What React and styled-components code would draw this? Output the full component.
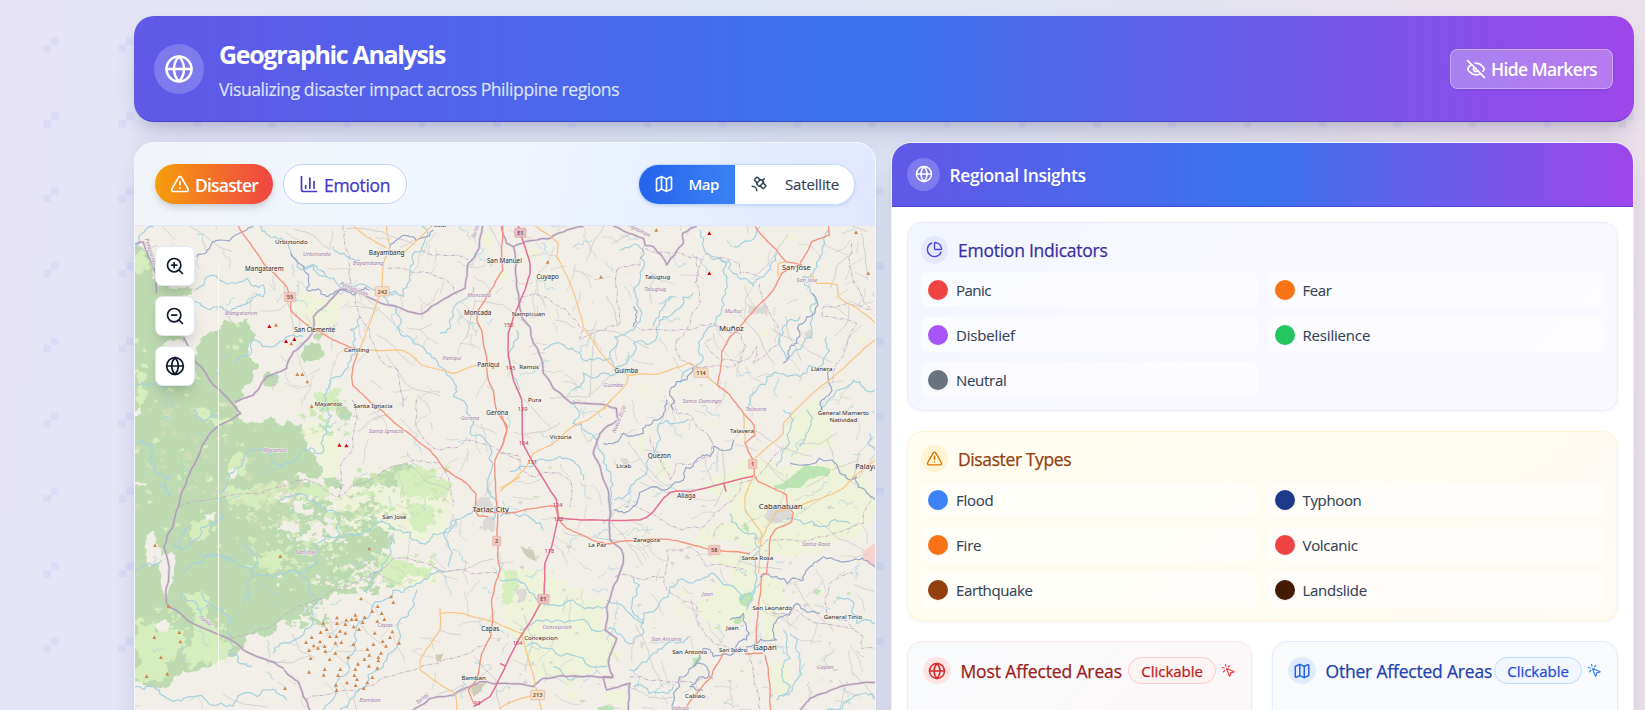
import React from 'react';
import styled, { createGlobalStyle } from 'styled-components';
import {
  Globe, TriangleAlert, ChartColumn, Map as MapIcon, Satellite,
  ZoomIn, ZoomOut, ChartPie, MousePointerClick,
} from 'lucide-react';

const GlobalStyle = createGlobalStyle`
  * { box-sizing: border-box; }
  body { margin: 0; overflow: hidden; font-family: "Open Sans", "Noto Sans", sans-serif; }
  button { font-family: inherit; margin: 0; }
`;

/* ---------- page shell ---------- */

const Page = styled.div`
  position: relative;
  height: 710px;
  overflow: hidden;
  background: linear-gradient(97deg, #e6e4f6 0%, #dfe6f4 42%, #e2e3f0 68%, #ebe2ec 86%, #ece1ea 100%);
`;

const Backdrop = styled.svg`
  position: absolute;
  inset: 0;
`;

const Content = styled.main`
  position: relative;
  display: flex;
  flex-direction: column;
  gap: 20px;
  padding: 16px 11px 0 134px;
`;

const shadow = '0 25px 31px -6px rgba(30,30,110,.08), 0 10px 13px -7px rgba(0,0,0,.13), 0 4px 22px rgba(50,50,130,.05)';
const brandGradient = 'linear-gradient(90deg, #6158e8 0%, #3a73ee 50%, #9e46ea 100%)';

const Hero = styled.header`
  display: flex;
  align-items: center;
  height: 106px;
  padding: 1px 21px 0 20px;
  border-radius: 20px;
  border-bottom: 1px solid rgba(60, 50, 190, 0.6);
  background: ${brandGradient};
  background-origin: border-box;
  box-shadow: ${shadow};
  color: #fff;
`;

const Orb = styled.span`
  flex: none;
  display: flex;
  align-items: center;
  justify-content: center;
  width: ${p => p.$size}px;
  height: ${p => p.$height || p.$size}px;
  border-radius: 50%;
  background: ${p => p.$bg || 'rgba(255,255,255,.2)'};
  color: ${p => p.$color || '#fff'};
`;

const HeroText = styled.div`
  flex: 1;
  margin-left: 15px;
  padding-top: 3px;
`;

const Title = styled.h1`
  margin: 0;
  font-size: 25px;
  font-weight: 700;
  line-height: 32px;
  letter-spacing: -1.33px;
`;

const Subtitle = styled.p`
  margin: 6px 0 0;
  font-size: 17.5px;
  line-height: 27px;
  letter-spacing: -0.42px;
  color: #dfe3fd;
  -webkit-text-stroke: 0.15px currentColor;
`;

const MarkerButton = styled.button`
  display: flex;
  align-items: center;
  gap: 5px;
  width: 163px;
  height: 40px;
  padding: 0 0 0 15px;
  border: 1px solid rgba(255, 255, 255, 0.35);
  border-radius: 7.5px;
  background: rgba(255, 255, 255, 0.28);
  box-shadow: 0 1px 3px rgba(0, 0, 0, 0.1);
  color: #fff;
  font-size: 17.5px;
  font-weight: 600;
  letter-spacing: -0.63px;
  white-space: nowrap;
`;

const Columns = styled.div`
  display: grid;
  grid-template-columns: 742px 743px;
  gap: 15px;
`;

const Panel = styled.section`
  height: 700px;
  overflow: hidden;
  border: 1px solid ${p => p.$border};
  border-radius: 20px;
  background: #fff;
  box-shadow: ${shadow};
`;

/* ---------- map panel ---------- */

const Toolbar = styled.div`
  display: flex;
  align-items: center;
  justify-content: space-between;
  height: 83px;
  padding: 0 20px;
  border-bottom: 1px solid #e0e7ff;
  background: linear-gradient(100deg, #f1f5f9, #eff6ff 50%, #e0e7ff);
`;

const PillGroup = styled.div`
  display: flex;
  gap: 10px;
`;

const Pill = styled.button`
  display: flex;
  align-items: center;
  gap: 5px;
  width: ${p => (p.$active ? 118 : 124)}px;
  height: 40px;
  padding: 2px 0 0 15px;
  border: ${p => (p.$active ? '0' : '1px solid #c7d2fe')};
  border-radius: 20px;
  background: ${p => (p.$active ? 'linear-gradient(90deg, #f59e0b, #ef4444)' : '#fff')};
  box-shadow: ${p => (p.$active ? '0 5px 8px -1px rgba(0,0,0,.12), 0 2px 5px -2px rgba(0,0,0,.12)' : 'none')};
  color: ${p => (p.$active ? '#fff' : '#4338ca')};
  font-size: 17.5px;
  font-weight: ${p => (p.$active ? 600 : 500)};
  letter-spacing: ${p => (p.$active ? -0.81 : -0.3)}px;
  -webkit-text-stroke: ${p => (p.$active ? 0 : 0.25)}px currentColor;
  svg { margin-top: -3px; }
`;

const Segmented = styled.div`
  display: flex;
  height: 41px;
  overflow: hidden;
  border: 1px solid #bfdbfe;
  border-radius: 21px;
  background: #fff;
  box-shadow: 0 1px 3px rgba(30, 60, 140, 0.15);
`;

const Segment = styled.button`
  display: flex;
  align-items: center;
  gap: ${p => (p.$active ? 14.5 : 17)}px;
  width: ${p => p.$width}px;
  padding: 0 0 0 15px;
  border: 0;
  background: ${p => (p.$active ? 'linear-gradient(90deg, #2563eb, #3b82f6)' : '#fff')};
  color: ${p => (p.$active ? '#fff' : '#334155')};
  font-size: 15px;
  font-weight: ${p => (p.$active ? 600 : 500)};
  letter-spacing: ${p => (p.$active ? -0.5 : -0.16)}px;
  -webkit-text-stroke: ${p => (p.$active ? 0 : 0.15)}px currentColor;
  svg { margin-top: -1px; }
`;

const MapFrame = styled.div`
  position: relative;
  height: 484px;
`;

const MapSvg = styled.svg`
  display: block;
  width: 740px;
  height: 484px;
`;

const MapControls = styled.div`
  position: absolute;
  top: 20px;
  left: 20px;
  display: flex;
  flex-direction: column;
  gap: 10px;
`;

const MapControl = styled.button`
  display: flex;
  align-items: center;
  justify-content: center;
  width: 40px;
  height: 40px;
  padding: 0 1px 1px 0;
  border: 1px solid #e2e8f0;
  border-radius: 7.5px;
  background: #fff;
  box-shadow: 0 12px 18px -4px rgba(0, 0, 0, 0.13), 0 5px 8px -5px rgba(0, 0, 0, 0.13);
  color: #0f172a;
`;

/* ---------- insights panel ---------- */

const PanelHeader = styled.div`
  display: flex;
  align-items: center;
  gap: 9.5px;
  height: 64px;
  padding: 0 15px 1px;
  border-bottom: 1px solid rgba(60, 50, 190, 0.6);
  background: ${brandGradient};
  background-origin: border-box;
  color: #fff;
  font-size: 17.5px;
  font-weight: 600;
  letter-spacing: -0.43px;
`;

const PanelBody = styled.div`
  display: flex;
  flex-direction: column;
  gap: 20px;
  padding: 15px;
`;

const Card = styled.div`
  padding: 13px;
  border: 1px solid ${p => p.$border};
  border-radius: 15px;
  background: ${p => p.$bg};
  box-shadow: 0 1px 3px rgba(80, 80, 120, 0.07);
`;

const CardTitle = styled.h2`
  display: flex;
  align-items: center;
  gap: 10px;
  margin: 0 0 ${p => p.$space}px;
  height: 27px;
  color: ${p => p.$color};
  font-size: 17.5px;
  font-weight: 500;
  line-height: 27px;
  letter-spacing: ${p => p.$tracking}px;
  -webkit-text-stroke: 0.25px currentColor;
`;

const TitleText = styled.span`
  padding-top: ${p => p.$drop || 0}px;
  white-space: nowrap;
`;

const ItemGrid = styled.div`
  display: grid;
  grid-template-columns: 1fr 1fr;
  gap: 10px;
`;

const Item = styled.div`
  display: flex;
  align-items: center;
  gap: 8px;
  height: 35px;
  padding-left: 7px;
  border-radius: 7.5px;
  background: rgba(255, 255, 255, 0.5);
  color: #334155;
  font-size: 15px;
  font-weight: 500;
  letter-spacing: ${p => p.$tracking}px;
  -webkit-text-stroke: 0.1px currentColor;
`;

const Dot = styled.span`
  width: 20px;
  height: 20px;
  border-radius: 50%;
  background: ${p => p.$color};
  box-shadow: 0 1px 2px rgba(0, 0, 0, 0.07);
`;

const AreaGrid = styled.div`
  display: grid;
  grid-template-columns: 345px 346px;
  gap: 20px;
`;

const AreaCard = styled(Card)`
  height: 200px;
  padding: 15px;
`;

const AreaHeader = styled.div`
  display: flex;
  align-items: center;
  height: 27px;
  color: ${p => p.$color};
  font-size: 17.5px;
  font-weight: 500;
  letter-spacing: ${p => p.$tracking}px;
  -webkit-text-stroke: 0.25px currentColor;
  white-space: nowrap;
  h2 { margin: 1px 0 0 9.5px; width: ${p => p.$titleWidth}px; font: inherit; }
`;

const Badge = styled.span`
  display: flex;
  align-items: center;
  justify-content: center;
  flex: none;
  width: 88px;
  height: 27px;
  margin-right: 5px;
  border: 1px solid ${p => p.$border};
  border-radius: 14px;
  background: ${p => p.$bg};
  color: ${p => p.$color};
  font-size: 15px;
  letter-spacing: -0.02px;
`;

/* ---------- map drawing ---------- */

const origin = { A: [0, 0], B: [1140, 0], C: [0, 810], D: [1140, 810] };

const place = (sheet, text) => {
  const [ox, oy] = origin[sheet];
  return text.trim().split(/\s+/).map(s => {
    const [x, y] = s.split(',').map(Number);
    return [x + ox, y + oy];
  });
};

function makeRandom(seed) {
  let s = seed;
  return () => {
    s = (s * 1664525 + 1013904223) % 4294967296;
    return s / 4294967296;
  };
}

// Midpoint displacement, for river banks and forest edges.
function roughen(points, amount, seed, depth = 3) {
  const rnd = makeRandom(seed);
  let pts = points;
  for (let k = 0; k < depth; k += 1) {
    const next = [pts[0]];
    for (let i = 1; i < pts.length; i += 1) {
      const [x0, y0] = pts[i - 1];
      const [x1, y1] = pts[i];
      const len = Math.hypot(x1 - x0, y1 - y0);
      if (len > 7) {
        const d = (rnd() - 0.5) * Math.min(amount * len, 34);
        next.push([(x0 + x1) / 2 - ((y1 - y0) / len) * d, (y0 + y1) / 2 + ((x1 - x0) / len) * d]);
      }
      next.push(pts[i]);
    }
    pts = next;
  }
  return pts;
}

const toPath = (pts, closed) =>
  'M' + pts.map(p => p[0].toFixed(1) + ' ' + p[1].toFixed(1)).join('L') + (closed ? 'Z' : '');

const route = (sheet, text, amount = 0.08, closed = false) => {
  const pts = place(sheet, text);
  if (closed) pts.push(pts[0]);
  return toPath(roughen(pts, amount, Math.round(pts[0][0] * 7 + pts[0][1] * 13 + pts.length), closed ? 4 : 3), closed);
};

const FOREST = [
  ['A', '10,372 62,350 84,368 100,410 112,470 160,476 218,474 216,494 150,500 178,540 160,600 120,640 225,690 240,640 270,604 310,572 350,582 385,566 392,590 414,616 388,640 386,680 416,704 398,744 372,768 346,816 352,850 380,880 440,850 470,880 545,880 556,930 590,985 606,1008 590,1048 520,1040 440,1066 400,1092 480,1110 560,1120 600,1100 650,1120 610,1160 560,1180 500,1170 470,1200 540,1230 600,1250 700,1230 740,1205 800,1205 815,1240 780,1280 700,1330 690,1360 640,1390 600,1410 550,1425 530,1460 470,1500 410,1505 370,1555 330,1580 270,1612 190,1620 160,1650 130,1670 10,1665'],
  ['A', '552,660 600,640 612,665 590,690 552,700 540,680'],
  ['A', '590,600 612,615 600,636 580,625'],
  ['A', '430,740 475,730 470,760 430,765'],
  ['A', '120,480 190,490 190,640 120,650'],
  ['C', '640,10 680,20 690,60 660,60 650,35'],
  ['C', '740,230 810,215 880,200 870,230 800,260 750,262'],
];
const GRASS = [
  ['C', '330,180 375,165 400,190 370,230 330,225'],
  ['C', '220,40 270,30 300,60 340,70 300,85 250,70'],
  ['C', '400,260 470,245 600,250 630,290 560,290 480,280 440,300 350,320 290,290'],
  ['C', '190,580 250,570 260,620 260,660 300,720 340,720 320,770 230,800 200,760 220,700 210,620'],
  ['C', '45,660 90,670 110,700 160,690 190,740 130,790 150,830 60,850 45,810'],
  ['C', '830,215 900,195 960,200 950,240 1000,250 960,290 900,290 840,270'],
  ['C', '870,320 940,320 950,370 920,395 890,390 870,350'],
  ['C', '780,470 940,490 920,530 840,560 790,550'],
  ['C', '210,370 260,350 270,400 230,420'],
  ['C', '400,470 460,450 500,480 470,510 420,500'],
  ['A', '45,375 75,365 95,410 60,430 45,420'],
  ['A', '580,800 640,770 670,780 650,830 590,840'],
  ['A', '45,740 75,730 85,790 60,830 45,810'],
  ['A', '170,700 210,720 200,760 160,750'],
  ['D', '0,500 40,510 60,560 20,620 0,610'],
];
const MEADOW = [
  ['A', '532,490 568,486 585,505 640,505 668,490 660,570 630,625 600,610 570,596 540,560 525,530'],
  ['C', '550,90 570,60 620,80 660,140 655,280 600,230 600,170 560,120'],
  ['C', '660,290 740,240 860,190 950,240 1000,300 980,380 920,430 820,390 740,380 690,420 640,390 650,310'],
  ['A', '1080,318 1115,300 1120,340 1090,360'],
  ['D', '850,80 900,40 920,10 960,0 990,60 985,150 880,190 850,160'],
  ['D', '600,270 640,230 700,210 720,180 780,180 830,200 960,190 1060,200 1110,250 1125,300 1090,380 1060,410 960,460 800,470 740,440 660,410 580,430 600,395 690,370 690,310'],
  ['D', '580,440 640,430 740,460 770,520 750,610 740,660 680,690 640,690 600,640 590,600 640,580 690,560 690,500'],
  ['D', '0,520 110,510 190,540 230,590 310,600 315,690 345,715 325,800 240,830 110,830 60,740 0,650'],
  ['D', '415,110 440,110 440,160 420,165'],
  ['D', '470,190 500,180 510,210 490,250 470,230'],
  ['D', '780,540 850,550 860,600 840,690 790,720 775,600'],
  ['D', '810,780 870,800 880,840 830,890 810,850'],
  ['D', '320,870 380,865 385,930 310,930'],
  ['C', '790,520 960,520 950,555 850,565 800,560'],
];
const WOOD = [
  ['D', '820,255 870,235 915,195 960,200 990,205 985,230 930,235 890,265 830,268'],
  ['D', '718,590 750,572 762,600 745,618 722,612'],
  ['D', '700,660 730,640 725,668 705,672'],
  ['D', '575,775 600,768 600,785 578,800'],
  ['D', '730,365 748,385 745,405 728,385'],
  ['D', '945,565 965,570 955,585 940,580'],
  ['D', '295,922 320,915 345,922 340,930 295,930'],
];
const BARE = [
  ['C', '45,35 60,20 66,40 45,48'],
  ['C', '80,405 100,390 108,430 125,445 118,490 88,500 80,450'],
  ['C', '132,460 152,455 145,580 138,600'],
  ['C', '340,5 480,0 455,40 385,70 365,40'],
  ['C', '455,40 490,22 535,40 520,62 475,65'],
  ['C', '252,345 290,335 280,365 258,362'],
  ['C', '325,212 350,205 345,235 325,245'],
  ['C', '520,305 550,305 552,330 580,320 578,345 525,335'],
  ['C', '480,365 540,370 550,400 520,400'],
  ['C', '45,245 80,250 78,256 45,254'],
  ['C', '105,675 150,670 140,695'],
];
const URBAN = [
  ['C', '1080,290 1110,290 1125,330 1085,345'],
  ['C', '1090,360 1125,355 1120,395 1095,395'],
  ['B', '735,520 800,520 805,560 745,550'],
  ['B', '905,605 935,590 940,625 915,615'],
  ['D', '800,330 880,320 875,355 830,370 800,360'],
  ['D', '45,570 80,565 75,600 50,610'],
  ['C', '1055,850 1095,850 1090,880 1060,885'],
  ['D', '360,175 385,180 375,205'],
];
const FIELDWORKS = [
  ['D', '60,440 100,450 110,485 80,470'],
  ['C', '945,765 970,760 965,785 950,785'],
  ['C', '1055,855 1098,850 1080,875 1060,890'],
];
const BORDERS = [
  ['A', '45,342 70,336 85,380 103,420 108,490'],
  ['A', '190,620 280,765 330,812 362,850 265,918 200,1050 175,1130 132,1250 140,1420 150,1432 300,1515 370,1560 490,1615 535,1655 570,1742'],
  ['A', '1088,288 1075,360 1045,400 1035,475 905,552 800,525 660,478 600,540 580,560 580,600 520,665 500,715 440,740 400,795 345,818'],
  ['B', '5,288 20,340 40,350 110,330 150,325 170,312 250,290'],
  ['B', '340,288 430,325 435,345 460,350 500,405 550,340 548,310 590,290'],
  ['B', '40,350 50,450 65,560 90,590 100,640 125,690 130,730 160,775 215,820 320,825 350,836 355,870 300,910 280,970 300,1010 320,1070 330,1160 330,1230 365,1260 370,1300 340,1370 320,1430 315,1500 350,1525 325,1600 340,1640'],
  ['D', '340,832 240,830 130,835 100,860 -60,845 -140,885 -210,895 -260,930'],
  ['D', '900,930 930,895 1020,860 1125,848'],
  ['D', '340,832 310,830 320,870 390,850 385,930'],
];
const DASHED = [
  ['A', '668,288 675,350 690,470'], ['A', '805,415 940,435 1000,470 1010,495'],
  ['A', '905,362 1045,390'], ['A', '690,470 720,560 760,640 780,690 835,720 850,830'],
  ['C', '175,320 380,280 540,240 650,292 750,240 860,190 960,190 985,250 1000,320'],
  ['C', '697,0 700,130 660,200 655,290'], ['C', '330,715 500,640 640,570 820,475 970,515 1140,520'],
  ['C', '555,900 760,855 900,800 1100,735'], ['C', '890,0 900,100 960,150 1040,120 1200,180'],
  ['B', '350,420 420,405 430,350 470,370 590,380 590,460 600,520 560,600 430,600 410,590'],
  ['B', '65,500 130,500 200,540 250,600 240,630 360,580 350,500 350,420'],
  ['B', '1055,340 1055,430 1115,540 970,530 965,560 1070,580 1040,650 1020,690 1000,760'],
  ['B', '530,630 560,600 640,580 720,610 740,650 720,700 660,690 615,640 640,625'],
  ['B', '530,630 540,690 590,710 700,710 770,650 760,700 790,680 840,640 830,580 800,530 780,460'],
  ['B', '585,460 620,370 720,400 720,430 780,440'],
  ['D', '525,0 530,40 570,45 620,100 640,130 630,170 530,190 510,240 470,170 450,110'],
  ['D', '375,320 450,340 500,370 600,385 700,300 720,250 830,160 850,140'],
  ['D', '640,410 650,385 670,370'], ['D', '740,460 800,420 1000,400 1090,370 1120,290'],
  ['D', '345,530 430,540 490,530 500,570 590,620 600,680 640,730 740,740 760,800 780,930'],
  ['D', '570,440 500,450 490,530'], ['D', '570,440 620,500 740,515'],
  ['D', '1060,520 990,550 980,640 1090,710 1085,745 1125,745'],
  ['D', '820,640 890,630 960,670 1060,685'], ['D', '390,830 520,845 640,835'],
  ['D', '0,160 60,170 60,210 110,230 180,220 210,240 210,320'],
];
const TRUNK = [
  ['A', '355,288 400,355 430,400 500,470 512,510 512,540 575,595 640,630 715,660 695,740 698,765 740,805 790,845 860,905 930,960 970,1015 1040,1060 1068,1090 1065,1140 1075,1158 1105,1160'],
  ['A', '1148,288 1148,420 1120,470 1075,540 1070,570 1085,600 1100,680 1105,750 1120,780 1130,840 1162,890 1150,940 1125,990 1128,1110 1132,1230 1140,1320 1115,1410 1118,1470 1112,1520 1085,1570 1070,1650 1045,1680 1062,1722'],
  ['D', '-80,330 20,338 100,325 165,318 175,350 185,370 200,385 240,402 290,425 330,432 430,420 530,422 600,440 750,463'],
  ['B', '765,288 830,360 858,395 905,405 845,430 820,480 720,590 690,620 665,665 652,765 690,795 725,840 762,885 765,915 735,940 760,990 762,1035 775,1055 820,1075 860,1095 862,1120 880,1150 875,1175 830,1195 812,1220 800,1330 785,1335 770,1540'],
  ['B', '985,288 988,315 935,335 900,400'],
  ['D', '795,765 805,810 812,930'], ['D', '735,762 790,760'], ['D', '672,755 640,810 635,830 560,920'],
  ['D', '0,30 20,90 10,130 0,150'],
];
const SECONDARY = [
  ['A', '800,288 810,350 790,400 785,480 760,550 735,620 718,660'], ['A', '700,288 740,320 800,355'],
  ['A', '930,292 880,340 850,370 810,365'], ['A', '745,660 850,662 880,680 905,705 1000,730 1075,705'],
  ['B', '105,288 175,340 170,380 210,460 250,590 290,650 350,720 385,735 380,760 310,840'],
  ['B', '385,735 465,733 570,698 652,765'], ['B', '930,430 950,460 1010,463 1015,500 1125,578'],
  ['B', '1125,630 1000,740 915,812 850,880 850,910 765,985'], ['B', '858,395 835,400 835,440'],
  ['D', '335,0 290,40 265,60 235,70 160,130 100,160 80,200 40,240 0,265'], ['D', '730,40 735,130'],
  ['D', '760,225 735,290 735,330 775,385 785,400 775,520'],
  ['D', '1125,180 1060,230 1030,265 890,320 830,335 775,430'], ['C', '1200,230 1140,275'],
  ['C', '960,625 960,690 900,780 900,810 940,840 1005,880 1010,930'],
  ['C', '960,640 1030,640 1080,655 1118,665'], ['C', '1118,663 1205,700 1220,760 1250,870 1265,930'],
  ['D', '0,925 110,880'],
];
const MOTORWAY = [
  ['B', '55,288 75,350 90,400 90,430 75,480 45,550 25,610 25,680 40,750 65,810 68,940 100,1000 170,1110 175,1160 155,1250 135,1300 132,1400 100,1460 50,1540 -30,1700 -80,1730'],
  ['D', '175,354 250,360 420,360 440,352 460,335 490,295 510,278 530,273 570,275 670,250 760,228'],
  ['D', '672,252 678,275'], ['D', '0,790 15,798'],
];
const RIVERS = [
  ['A', '420,288 440,312 490,330 512,370 545,420 575,405 620,440 690,470 790,475 830,490'],
  ['A', '545,410 575,405 600,420 620,440'],
  ['A', '905,288 905,360 870,420 850,500 800,490'],
  ['A', '225,480 290,440 380,445 430,465 430,500 380,520 330,550 250,530 220,510'],
  ['A', '790,500 830,530 835,590 880,640 930,670 990,740 1000,800 1050,910 1110,950 1115,1090'],
  ['A', '720,560 690,600 710,660 660,740 620,780 600,840'], ['A', '550,620 480,635 400,630 370,680 345,700'],
  ['A', '45,350 100,290'], ['A', '640,350 680,380 720,390'], ['A', '960,610 1000,560 1060,470'],
  ['A', '1190,600 1170,700 1200,780'], ['A', '45,770 90,760 140,775'],
  ['C', '620,20 620,80 605,160 540,160 500,190 460,190 440,150 380,160 330,220 310,350 270,380'],
  ['C', '45,130 90,130 110,220 150,230 150,290 120,250'], ['C', '210,380 180,440 160,430'],
  ['C', '240,460 340,480 400,530 510,510 540,520 590,490 590,440 660,400 650,340 600,310 540,280 480,300'],
  ['C', '660,410 700,410 760,375 830,390 900,430 940,400 1000,380 1060,330'],
  ['C', '820,400 800,480 750,520 740,580'], ['C', '540,520 590,600 580,670 480,730 460,760'],
  ['C', '970,515 880,560 820,570 730,660 700,760 660,830 610,930'],
  ['C', '890,570 880,620 840,660 800,780 740,850 690,900 660,930'],
  ['C', '45,860 100,860 170,900 190,895 320,920 370,880 450,870 500,900'],
  ['C', '330,760 360,790 395,800'], ['C', '180,580 230,610 245,640'], ['C', '370,430 410,470 390,570 370,610'],
  ['C', '245,570 330,650 325,770'], ['C', '220,30 230,50 260,60 290,50'], ['C', '45,515 100,500 125,480'],
  ['C', '190,520 300,465 340,480'], ['C', '160,440 210,430 290,360'],
  ['C', '1100,270 1130,300 1115,360'], ['C', '1000,360 980,420 985,500'],
  ['B', '360,360 430,360 420,450 410,520 400,600 345,620 340,710 380,700 400,640 470,620 490,560 580,490'],
  ['B', '600,300 620,370 680,400 675,480 650,560 610,620 600,700 540,760'],
  ['B', '990,300 960,380 910,440 935,490 950,520 930,540 910,640 860,690'],
  ['B', '130,660 200,655 250,690 330,685'], ['B', '650,380 700,430 760,470 790,440 830,370'],
  ['B', '980,620 970,700 900,740 800,740 750,810 740,840'], ['B', '700,350 780,290'],
  ['B', '1125,780 1060,750 1000,800 960,840'], ['B', '860,690 850,610 900,560'],
  ['B', '220,780 250,730 320,730 360,720'], ['B', '460,590 490,530 520,500'],
  ['D', '220,0 220,70 290,120 320,210 330,300 310,370'], ['D', '345,300 410,240 470,140 500,60 570,60'],
  ['D', '30,215 160,180 200,175 250,240'], ['D', '830,200 850,150 880,60 850,30'],
  ['D', '900,140 930,80 920,30'], ['D', '690,340 760,400 780,450 770,540 740,630'],
  ['D', '780,550 720,600 640,520 590,540 510,560 430,640 430,670 320,600'],
  ['D', '400,530 400,640 430,660 400,730 320,690'], ['D', '0,540 80,560 120,610 220,600 320,620'],
  ['D', '60,690 170,660 270,680 310,690'], ['D', '80,740 200,760 320,800'], ['D', '160,800 240,830'],
  ['D', '1110,100 1125,150'], ['D', '850,690 850,800 870,860 830,900'], ['D', '870,700 900,760 890,840 850,890'],
  ['D', '390,810 460,760 530,730 570,710'], ['D', '400,860 500,880 520,860'], ['D', '1125,900 1060,890 980,930'],
  ['D', '860,360 960,380 1050,370'], ['D', '0,350 60,350 130,390'], ['D', '1010,590 1060,620 1070,670 1125,670'],
];
const RIVERS_DARK = [
  ['A', '230,380 270,350 380,300 400,288'], ['A', '512,370 560,430 560,480 620,500 660,480 700,495 750,480'],
  ['A', '810,352 870,320 940,300'],
  ['B', '935,490 950,510 920,560 890,640 870,650 850,700'], ['B', '990,720 990,790 965,840'],
  ['B', '400,530 410,560 400,590'], ['B', '580,710 560,750 510,780 520,840'],
  ['D', '340,330 400,320 460,260 550,240 590,180 630,170 640,140 690,150 700,120'],
  ['D', '310,130 370,100 430,100 460,60 500,0'],
  ['D', '870,190 990,180 1020,220 1070,230 1100,280 1125,300'],
  ['D', '780,530 830,530 860,550 910,540 930,500 970,470 1060,480 1110,490 1125,500'],
  ['D', '690,660 730,640 740,720 700,760 640,770 610,745 580,800 520,880 520,930'],
  ['D', '580,800 620,800 630,830 590,840 570,860 610,870'],
  ['D', '740,740 830,720 830,660 890,610 960,640'],
];

const LABELS = [
  ['A', 514, 343, 'Urbiztondo', 18.5], ['A', 800, 376, 'Bayambang', 19], ['A', 433, 424, 'Mangatarem', 19],
  ['A', 584, 606, 'San Clemente', 19], ['A', 710, 667, 'Camiling', 18.5], ['A', 626, 828, 'Mayantoc', 18.5],
  ['A', 759, 834, 'Santa Ignacia', 18.5], ['A', 1073, 555, 'Moncada', 19], ['A', 1105, 710, 'Paniqui', 19],
  ['A', 955, 290, 'Pasta', 18], ['B', 13, 399, 'San Manuel', 19], ['B', 143, 448, 'Cuyapo', 19],
  ['B', 85, 558, 'Nampicuan', 18.5], ['B', 87, 716, 'Ramos', 18.5], ['B', 104, 816, 'Pura', 18.5],
  ['B', 473, 448, 'Talugtug', 18.5], ['B', 889, 419, 'San Jose', 22], ['B', 694, 604, 'Muñoz', 23],
  ['B', 379, 729, 'Guimba', 19], ['B', 965, 724, 'Llanera', 18.5], ['C', 1132, 46, 'Gerona', 19],
  ['C', 823, 356, 'San Jose', 18.5], ['C', 1112, 337, 'Tarlac City', 23], ['C', 1111, 693, 'Capas', 19],
  ['C', 1061, 841, 'Bamban', 18.5], ['D', 182, 117, 'Victoria', 18.5], ['D', 371, 205, 'Licab', 18.5],
  ['D', 478, 175, 'Quezon', 19], ['D', 559, 294, 'Aliaga', 19], ['D', 292, 441, 'La Paz', 18.5],
  ['D', 440, 427, 'Zaragoza', 18.5], ['D', 726, 100, 'Talavera', 18.5], ['D', 1030, 45, 'General Mamerto', 18.5],
  ['D', 1030, 67, 'Natividad', 18.5], ['D', 1106, 206, 'Palayan', 22], ['D', 842, 327, 'Cabanatuan', 23],
  ['D', 772, 481, 'Santa Rosa', 18.5], ['D', 817, 630, 'San Leonardo', 18.5], ['D', 1029, 658, 'General Tinio', 18.5],
  ['D', 697, 691, 'Jaen', 18.5], ['D', 569, 762, 'San Antonio', 18.5], ['D', 699, 755, 'San Isidro', 18],
  ['D', 795, 750, 'Gapan', 23], ['D', 585, 894, 'Cabiao', 18.5], ['D', 123, 719, 'Concepcion', 18.5],
];
const REGIONS = [
  ['A', 591, 378, 'Urbiztondo'], ['A', 745, 405, 'Bayambang'], ['A', 363, 555, 'Mangatarem'],
  ['A', 1077, 501, 'Moncada'], ['A', 996, 691, 'Paniqui'], ['B', 466, 483, 'Talugtug'], ['B', 700, 548, 'Muñoz'],
  ['B', 921, 456, 'San Jose'], ['B', 340, 771, 'Guimba'], ['B', 606, 818, 'Santo Domingo'],
  ['C', 465, 157, 'Mayantoc'], ['C', 798, 99, 'Santa Ignacia'], ['C', 1050, 60, 'Gerona'], ['C', 558, 462, 'San Jose'],
  ['C', 795, 681, 'Capas'], ['C', 750, 905, 'Bamban'], ['D', 768, 33, 'Talavera'], ['D', 948, 438, 'Santa Rosa'],
  ['D', 622, 588, 'Jaen'], ['D', 500, 722, 'San Antonio'], ['D', 975, 808, 'Gapan'], ['D', 171, 687, 'Concepcion'],
  ['D', 540, 930, 'Cabiao'], ['A', 88, 370, 'Pangasinan', 72], ['A', 700, 482, 'Pangasinan', 22],
  ['B', 408, 302, 'Pangasinan', 27], ['C', 255, 668, 'Tarlac', 35], ['C', 910, 900, 'Tarlac', -38],
  ['D', 362, 60, 'Nueva Ecija', -68], ['A', 1072, 305, 'Tarlac', -72],
];
const SHIELDS = [
  ['A', 510, 501, '55', '#f3c7bf'], ['A', 787, 484, '242', '#f9dfbf'], ['B', 61, 308, 'E1', '#e9bcc8'],
  ['B', 603, 728, '114', '#f9dfbf'], ['D', 758, 192, '1', '#f3c7bf'], ['D', 643, 450, '58', '#f3c7bf'],
  ['D', 130, 597, 'E1', '#e9bcc8'], ['D', 113, 885, '213', '#f9dfbf'], ['C', 1130, 423, '2', '#f3c7bf'],
];
const EXITS = [
  ['B', 26, 590, '150'], ['B', 32, 721, '145'], ['D', 68, 32, '139'], ['D', 71, 134, '134'], ['D', 97, 192, '131'],
  ['D', 173, 321, '124'], ['D', 175, 362, '122'], ['D', 148, 458, '118'], ['D', 53, 735, '104'], ['C', 1072, 915, '93'],
];
const PEAKS = [
  ['A', '468,585 514,641 532,733 547,733 562,755 575,829'],
  ['B', '469,300 143,396 303,441 1068,307 1105,430'],
  ['C', `105,436 481,469 748,446 146,619 103,712 178,697 181,725 123,772 80,829 142,822 495,865
  723,596 813,590 820,607 773,619 757,634 785,640 706,645 734,652 651,653 679,660 695,658 709,658 728,667
  772,664 793,658 610,669 651,670 676,673 701,680 717,688 620,688 602,697 660,693 676,699 764,699 817,695
  575,712 630,709 649,709 810,712 558,727 600,725 646,729 664,727 700,733 760,733 788,724 837,729 798,738
  581,737 594,744 614,739 567,751 616,754 646,760 742,748 783,759 572,775 629,778 684,772 733,778 748,765
  775,772 775,782 714,792 747,798 772,804 567,816 614,808 661,808 706,808 611,825 654,826 703,826 711,838
  757,832 648,855 681,848 742,848 707,856 650,871 731,865`],
];
const VOLCANOES = [
  ['A', '448,589 523,628 498,634'], ['B', '628,310 628,430'], ['C', '658,135 679,137'],
];

// Fine network of lanes, creeks and field patches across the plain.
const inForest = (x, y) => (x < 660 && y > 850 && y < 1640 && y < 1900 - x * 0.75) || (x < 400 && y > 560 && y < 1660);

function scatterLines(count, seed, length, amount, allowForest) {
  const rnd = makeRandom(seed);
  let d = '';
  for (let i = 0; i < count; i += 1) {
    const x = 45 + rnd() * 2220;
    const y = 288 + rnd() * 1452;
    const angle = rnd() * Math.PI * 2;
    const len = length * (0.4 + rnd());
    const bend = (rnd() - 0.5) * 1.4;
    if (!allowForest && inForest(x, y)) continue;
    const x1 = x + Math.cos(angle) * len;
    const y1 = y + Math.sin(angle) * len;
    const x2 = x1 + Math.cos(angle + bend) * len;
    const y2 = y1 + Math.sin(angle + bend) * len;
    if (!allowForest && inForest(x2, y2)) continue;
    d += toPath(roughen([[x, y], [x1, y1], [x2, y2]], amount, i * 31 + seed));
  }
  return d;
}

function scatterPatches(count, seed, size, zone) {
  const rnd = makeRandom(seed);
  const [x0, y0, w, h] = zone;
  let d = '';
  for (let i = 0; i < count; i += 1) {
    const x = x0 + rnd() * w;
    const y = y0 + rnd() * h;
    const r = size * (0.35 + rnd());
    const pts = [];
    for (let k = 0; k < 11; k += 1) {
      const a = (k / 11) * Math.PI * 2;
      const q = r * (0.2 + rnd() * 1.1);
      pts.push([x + Math.cos(a) * q, y + Math.sin(a) * q * 0.75]);
    }
    d += toPath(pts, true);
  }
  return d;
}

const Areas = ({ items, fill, amount = 0.5, opacity = 1 }) => (
  <g fill={fill} opacity={opacity}>
    {items.map((a, i) => <path key={i} d={route(a[0], a[1], amount, true)} />)}
  </g>
);

const Lines = ({ items, stroke, width, amount, dash, opacity = 1 }) => (
  <g fill="none" stroke={stroke} strokeWidth={width} strokeDasharray={dash} strokeLinejoin="round" opacity={opacity}>
    {items.map((a, i) => <path key={i} d={route(a[0], a[1], amount)} />)}
  </g>
);

const Triangles = ({ items, fill }) => (
  <path
    fill={fill}
    d={items.flatMap(([s, t]) => place(s, t)).map(([x, y]) => `M${x - 6} ${y + 5}L${x} ${y - 6}L${x + 6} ${y + 5}Z`).join('')}
  />
);

const TerrainMap = () => (
  <MapSvg viewBox="45 288 2220 1452" preserveAspectRatio="none">
    <rect x="45" y="288" width="2220" height="1452" fill="#f2efe9" />
    <Areas items={MEADOW} fill="#eff3da" />
    <path d={scatterPatches(40, 77, 18, [1100, 300, 1160, 1430])} fill="#eff3da" />
    <Areas items={FOREST} fill="#bddab1" amount={0.6} />
    <path d={scatterPatches(110, 15, 22, [500, 1050, 260, 300])} fill="#bddab1" />
    <path d={scatterPatches(110, 5, 14, [640, 1150, 180, 240])} fill="#bddab1" />
    <path d={scatterPatches(60, 25, 10, [500, 1400, 120, 90])} fill="#bddab1" />
    <path d={scatterPatches(130, 6, 12, [380, 1080, 390, 280])} fill="#d6ebbd" />
    <path d={scatterPatches(90, 8, 8, [470, 1090, 300, 290])} fill="#f0efe0" />
    <Areas items={GRASS} fill="#d6eebd" amount={0.7} />
    <path d={scatterPatches(60, 9, 12, [45, 820, 380, 330])} fill="#d3ddb8" opacity=".8" />
    <path d={scatterPatches(50, 10, 12, [400, 1060, 150, 140])} fill="#d3ddb8" opacity=".8" />
    <path d={scatterPatches(60, 19, 12, [45, 1440, 280, 180])} fill="#d6eebd" />
    <path d={scatterPatches(60, 49, 9, [45, 570, 330, 700])} fill="#d6eebd" />
    <path d={scatterPatches(80, 29, 10, [700, 1010, 290, 150])} fill="#cde8b4" />
    <path d={scatterPatches(30, 31, 8, [830, 1270, 120, 90])} fill="#cde8b4" />
    <path d={scatterPatches(40, 39, 10, [540, 800, 150, 120])} fill="#cde8b4" />
    <Areas items={BARE} fill="#f2efe9" />
    <Areas items={WOOD} fill="#bbe5b3" amount={0.3} />
    <Areas items={URBAN} fill="#dcdad7" />
    <Areas items={FIELDWORKS} fill="#cfccb8" amount={0.2} />
    <path d="M2225 1265L2265 1240V1310L2240 1300Z" fill="#f6d3cc" />
    <path d={scatterPatches(110, 12, 7, [1000, 1100, 1200, 620])} fill="#d9d6d2" />
    <path d={scatterPatches(30, 14, 5, [1150, 300, 1100, 1400])} fill="#cbeab8" />
    <path d={scatterLines(420, 101, 34, 0.18)} fill="none" stroke="#cfccc9" strokeWidth="2" />
    <path d={scatterLines(90, 151, 80, 0.12)} fill="none" stroke="#c4c2c2" strokeWidth="2" />
    <path d={scatterLines(150, 201, 26, 0.8, true)} fill="none" stroke="#aad3df" strokeWidth="2.2" />
    <Lines items={RIVERS} stroke="#a6d1df" width="3.6" amount={0.55} />
    <Lines items={RIVERS_DARK} stroke="#98a9c8" width="3.6" amount={0.5} />
    <Lines items={DASHED} stroke="#c3abc6" width="2.8" amount={0.25} dash="12 4 3 4" />
    <Lines items={BORDERS} stroke="#c9b5cf" width="8" amount={0.14} opacity={0.45} />
    <Lines items={BORDERS} stroke="#af99b5" width="3.6" amount={0.14} />
    <Lines items={SECONDARY} stroke="#f9c682" width="3.6" />
    <Lines items={TRUNK} stroke="#f6957f" width="4.2" />
    <Lines items={MOTORWAY} stroke="#e4708f" width="4.6" amount={0.03} />
    <path d="M295.500 408V1618" stroke="#fbfbf2" strokeWidth="3" />
    <path d="M295 1618H760" stroke="#f8f6f2" strokeWidth="2" />
    <Triangles items={PEAKS} fill="#d08a50" />
    <Triangles items={VOLCANOES} fill="#d40000" />
    {SHIELDS.map(([s, x, y, t, fill], i) => {
      const [cx, cy] = place(s, `${x},${y}`)[0];
      const w = t.length > 2 ? 42 : t.length > 1 ? 34 : 25;
      return (
        <g key={i}>
          <rect x={cx - w / 2} y={cy - 14} width={w} height="28" rx="3" fill={fill} stroke="#d9b3a8" strokeWidth="2" />
          <text x={cx} y={cy + 6.500} textAnchor="middle" fontFamily="Noto Sans" fontWeight="600" fontSize="17" fill="#6b4a44">{t}</text>
        </g>
      );
    })}
    <g fontFamily="Noto Sans" fontSize="17" fill="#b9334e" textAnchor="middle">
      {EXITS.map(([s, x, y, t], i) => {
        const [cx, cy] = place(s, `${x},${y}`)[0];
        return <text key={i} x={cx} y={cy}>{t}</text>;
      })}
    </g>
    <g fontFamily="Noto Sans" fontStyle="italic" fontSize="17" fill="#a583ac" textAnchor="middle" stroke="#f5f2ee" strokeWidth="3" paintOrder="stroke">
      {REGIONS.map(([s, x, y, t, turn], i) => {
        const [cx, cy] = place(s, `${x},${y}`)[0];
        return <text key={i} x={cx} y={cy} transform={turn ? `rotate(${turn} ${cx} ${cy})` : undefined}>{t}</text>;
      })}
    </g>
    <g fontFamily="Noto Sans" fill="#2b2b2b" textAnchor="middle" stroke="#f5f2ee" strokeWidth="3" paintOrder="stroke">
      {LABELS.map(([s, x, y, t, size], i) => {
        const [cx, cy] = place(s, `${x},${y}`)[0];
        return <text key={i} x={cx} y={cy} fontSize={size}>{t}</text>;
      })}
    </g>
  </MapSvg>
);

/* ---------- small pieces ---------- */

const HiddenEye = () => (
  <svg width="20" height="20" viewBox="0 0 24 24" fill="none" stroke="currentColor" strokeWidth="2" strokeLinecap="round" strokeLinejoin="round">
    <path d="M9.880 9.880a3 3 0 1 0 4.240 4.240" />
    <path d="M10.730 5.080A10.430 10.430 0 0 1 12 5c7 0 10 7 10 7a13.160 13.160 0 0 1-1.670 2.680" />
    <path d="M6.610 6.610A13.526 13.526 0 0 0 2 12s3 7 10 7a9.740 9.740 0 0 0 5.390-1.610" />
    <path d="M2 2l20 20" />
  </svg>
);

const Checkers = () => (
  <Backdrop width="1645" height="710">
    <defs>
      <pattern id="checkers" width="75" height="75" patternUnits="userSpaceOnUse">
        <path d="M51 37.500h7.500v7.500h-7.500zM43.500 45h7.500v7.500h-7.500z" fill="#6366f1" fillOpacity=".075" />
      </pattern>
    </defs>
    <rect width="1645" height="710" fill="url(#checkers)" />
  </Backdrop>
);

const EMOTIONS = [
  ['Panic', '#ef4444', -0.5], ['Fear', '#f97316', -0.4], ['Disbelief', '#a855f7', -0.18],
  ['Resilience', '#22c55e', -0.18], ['Neutral', '#6b7280', -0.3],
];
const DISASTERS = [
  ['Flood', '#3b82f6', -0.3], ['Typhoon', '#1e3a8a', -0.35], ['Fire', '#f97316', -0.2],
  ['Volcanic', '#ef4444', -0.3], ['Earthquake', '#92400e', -0.39], ['Landslide', '#451a03', -0.28],
];

const Legend = ({ items }) => (
  <ItemGrid>
    {items.map(([label, color, tracking]) => (
      <Item key={label} $tracking={tracking}><Dot $color={color} />{label}</Item>
    ))}
  </ItemGrid>
);

export default function App() {
  return (
    <Page>
      <GlobalStyle />
      <Checkers />
      <Content>
        <Hero>
          <Orb $size={50}><Globe size={30} /></Orb>
          <HeroText>
            <Title>Geographic Analysis</Title>
            <Subtitle>Visualizing disaster impact across Philippine regions</Subtitle>
          </HeroText>
          <MarkerButton><HiddenEye />Hide Markers</MarkerButton>
        </Hero>
        <Columns>
          <Panel $border="#f3f6fd">
            <Toolbar>
              <PillGroup>
                <Pill $active><TriangleAlert size={20} />Disaster</Pill>
                <Pill><ChartColumn size={20} />Emotion</Pill>
              </PillGroup>
              <Segmented>
                <Segment $active $width={96}><MapIcon size={20} />Map</Segment>
                <Segment $width={119}><Satellite size={18} />Satellite</Segment>
              </Segmented>
            </Toolbar>
            <MapFrame>
              <TerrainMap />
              <MapControls>
                <MapControl><ZoomIn size={20} /></MapControl>
                <MapControl><ZoomOut size={20} /></MapControl>
                <MapControl><Globe size={20} /></MapControl>
              </MapControls>
            </MapFrame>
          </Panel>
          <Panel $border="#eef0fd">
            <PanelHeader>
              <Orb $size={33}><Globe size={18} /></Orb>
              <TitleText $drop={2}>Regional Insights</TitleText>
            </PanelHeader>
            <PanelBody>
              <Card $border="#e9ecfd" $bg="linear-gradient(135deg, #f2f6ff, #f7f7ff 30%, #faf8ff)">
                <CardTitle $space={9} $color="#3730a3" $tracking={-0.25}>
                  <Orb $size={27} $height={28} $bg="#e4e9fe" $color="#4f46e5"><ChartPie size={17} /></Orb>
                  <TitleText $drop={2}>Emotion Indicators</TitleText>
                </CardTitle>
                <Legend items={EMOTIONS} />
              </Card>
              <Card $border="#fdf4d6" $bg="linear-gradient(135deg, #fffdef, #fffcf2 40%, #fefaf4)">
                <CardTitle $space={10} $color="#92400e" $tracking={-0.38}>
                  <Orb $size={27} $bg="#fef3d2" $color="#d97706"><TriangleAlert size={17} /></Orb>
                  <TitleText $drop={2}>Disaster Types</TitleText>
                </CardTitle>
                <Legend items={DISASTERS} />
              </Card>
              <AreaGrid>
                <AreaCard $border="#fbe6e9" $bg="linear-gradient(135deg, #f8fafc, #fdf6f7)">
                  <AreaHeader $color="#991b1b" $tracking={-0.13} $titleWidth={169}>
                    <Orb $size={28} $height={27} $bg="#fde5e5" $color="#dc2626"><Globe size={18} /></Orb>
                    <h2>Most Affected Areas</h2>
                    <Badge $border="#fdc9c9" $bg="#fdf3f3" $color="#b91c1c">Clickable</Badge>
                    <MousePointerClick size={15} color="#ef4444" />
                  </AreaHeader>
                </AreaCard>
                <AreaCard $border="#e3ebfc" $bg="linear-gradient(135deg, #f8fafc, #f8faff)">
                  <AreaHeader $color="#1e40af" $tracking={-0.2} $titleWidth={169}>
                    <Orb $size={28} $height={27} $bg="#e0ecfe" $color="#2563eb"><MapIcon size={18} /></Orb>
                    <h2>Other Affected Areas</h2>
                    <Badge $border="#bddafe" $bg="#f1f6ff" $color="#1d4ed8">Clickable</Badge>
                    <MousePointerClick size={15} color="#3b82f6" />
                  </AreaHeader>
                </AreaCard>
              </AreaGrid>
            </PanelBody>
          </Panel>
        </Columns>
      </Content>
    </Page>
  );
}
